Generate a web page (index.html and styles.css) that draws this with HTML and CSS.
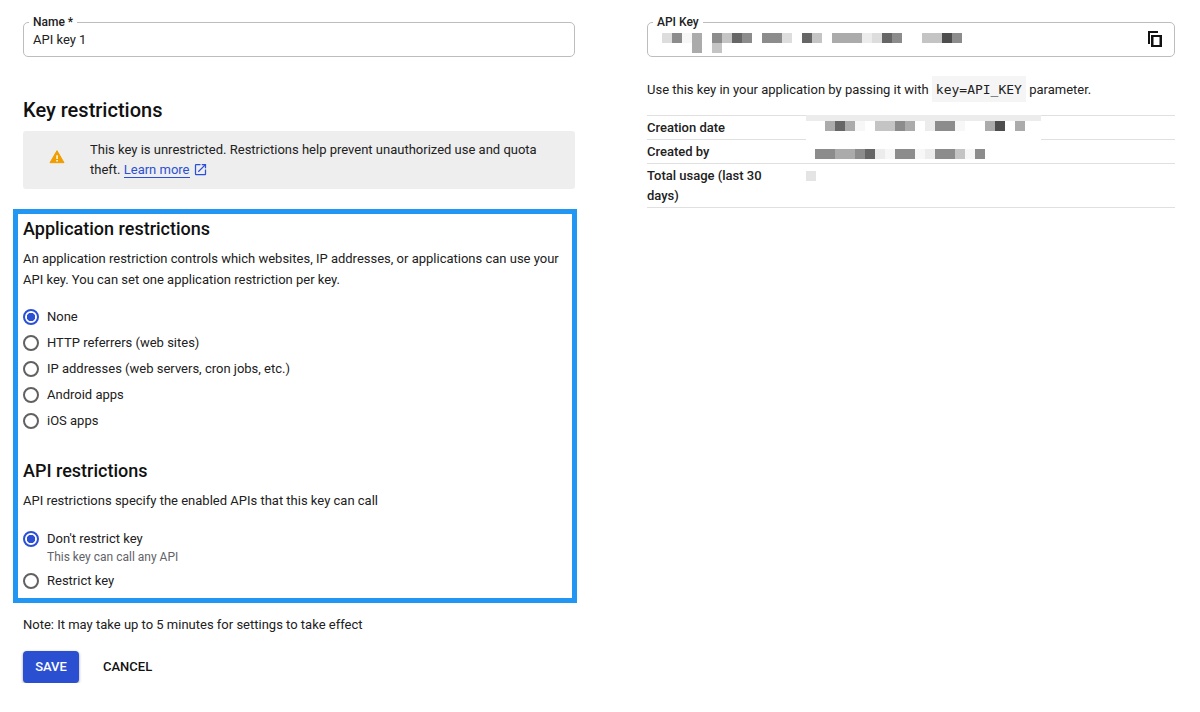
FILE: index.html
```html
<!DOCTYPE html>
<html lang="en">
<head>
  <meta charset="UTF-8" />
  <title>API key</title>
  <link rel="stylesheet" href="styles.css">
</head>
<body>

<div class="page">

  <div class="left-col">
    <div class="field name-field">
      <span class="field-label">Name *</span>
      <span class="field-value">API key 1</span>
    </div>

    <h2 class="key-title">Key restrictions</h2>

    <div class="alert">
      <svg class="alert-icon" width="16" height="16" viewBox="0 0 24 24"><path fill="#f09d00" stroke="#f09d00" stroke-width="1.500" stroke-linejoin="round" d="M1.500 20.500h21L12 2.500z"/><path fill="#fff" d="M11 9.500h2.200v5.500H11zM11 16.500h2.200v2.200H11z"/></svg>
      <p>This key is unrestricted. Restrictions help prevent unauthorized use and quota theft. <a href="#">Learn more</a>
        <svg class="ext-icon" width="15" height="15" viewBox="0 0 24 24"><path fill="#2b50d5" d="M19 19H5V5h7V3H5a2 2 0 0 0-2 2v14a2 2 0 0 0 2 2h14c1.100 0 2-.9 2-2v-7h-2v7zM14 3v2h3.590l-9.830 9.830 1.410 1.410L19 6.410V10h2V3h-7z"/></svg>
      </p>
    </div>

    <div class="highlight">
      <h3>Application restrictions</h3>
      <p class="desc">An application restriction controls which websites, IP addresses, or applications can use your API key. You can set one application restriction per key.</p>
      <div class="radio-group">
        <div class="radio-row"><span class="radio on"></span>None</div>
        <div class="radio-row"><span class="radio"></span>HTTP referrers (web sites)</div>
        <div class="radio-row"><span class="radio"></span>IP addresses (web servers, cron jobs, etc.)</div>
        <div class="radio-row"><span class="radio"></span>Android apps</div>
        <div class="radio-row"><span class="radio"></span>iOS apps</div>
      </div>

      <h3 class="api-title">API restrictions</h3>
      <p class="desc">API restrictions specify the enabled APIs that this key can call</p>
      <div class="radio-group api-group">
        <div class="radio-row with-hint"><span class="radio on"></span>Don't restrict key</div>
        <div class="hint">This key can call any API</div>
        <div class="radio-row"><span class="radio"></span>Restrict key</div>
      </div>
    </div>

    <p class="note">Note: It may take up to 5 minutes for settings to take effect</p>

    <div class="actions">
      <button class="btn-save">SAVE</button>
      <button class="btn-cancel">CANCEL</button>
    </div>
  </div>

  <div class="right-col">
    <div class="field key-field">
      <span class="field-label">API Key</span>
      <div class="mosaic key-mosaic">
        <div class="mosaic-row">
          <i class="s1"></i><i class="s4"></i><i class="w0"></i><i class="s3"></i><i class="s0"></i><i class="s4"></i><i class="s2"></i><i class="s5"></i><i class="s4"></i><i class="s0"></i><i class="s4"></i><i class="s4"></i><i class="s1"></i><i class="s0"></i><i class="s5"></i><i class="s2"></i><i class="s0"></i><i class="s3"></i><i class="s3"></i><i class="s3"></i><i class="w1"></i><i class="s1"></i><i class="s5"></i><i class="s4"></i><i class="s0"></i><i class="s0"></i><i class="s2"></i><i class="s2"></i><i class="s6"></i><i class="s4"></i>
        </div>
        <div class="mosaic-row">
          <i class="s0"></i><i class="s0"></i><i class="s0"></i><i class="s3"></i><i class="s0"></i><i class="s2"></i>
        </div>
      </div>
      <svg class="copy-icon" width="14" height="16" viewBox="0 0 14 16"><path fill="#111" d="M0 0h10v2H2v11H0z"/><path fill="#111" fill-rule="evenodd" d="M3 4h11v12H3zM5.500 6v8h6V6z"/></svg>
    </div>

    <p class="use-key">Use this key in your application by passing it with <code>key=API_KEY</code> parameter.</p>

    <div class="info-table">
      <div class="info-row">
        <div class="info-label">Creation date</div>
        <div class="date-value">
          <div class="mosaic-row">
            <i class="s3"></i><i class="s5"></i><i class="s3"></i><i class="w0"></i><i class="s0"></i><i class="s2"></i><i class="s2"></i><i class="s4"></i><i class="s3"></i><i class="s0"></i><i class="w1"></i><i class="s4"></i><i class="s4"></i><i class="w0"></i><i class="s0"></i><i class="s0"></i><i class="s3"></i><i class="s6"></i><i class="s0"></i><i class="s3"></i>
          </div>
        </div>
      </div>
      <div class="info-row">
        <div class="info-label">Created by</div>
        <div class="info-value">
          <div class="mosaic-row">
            <i class="s4"></i><i class="s4"></i><i class="s3"></i><i class="s3"></i><i class="s4"></i><i class="s5"></i><i class="w1"></i><i class="w0"></i><i class="s4"></i><i class="s4"></i><i class="w0"></i><i class="w1"></i><i class="s4"></i><i class="s4"></i><i class="s2"></i><i class="w0"></i><i class="s4"></i>
          </div>
        </div>
      </div>
      <div class="info-row">
        <div class="info-label">Total usage (last 30 days)</div>
        <div class="info-value usage-value"><div class="mosaic-row"><i class="w2"></i></div></div>
      </div>
    </div>
  </div>

</div>

</body>
</html>
```

FILE: styles.css
```css
* {
  box-sizing: border-box;
}

body {
  margin: 0;
  background: #fff;
  color: #212121;
  font-family: Roboto, sans-serif;
  font-size: 13px;
  line-height: 20px;
}

p, h2, h3 {
  margin: 0;
}

.page {
  display: flex;
  align-items: flex-start;
  padding: 22px 25px 0 23px;
  gap: 72px;
}

.left-col {
  width: 552px;
  flex-shrink: 0;
}

.right-col {
  flex: 1;
}

/* outlined field */
.field {
  position: relative;
  height: 35px;
  border: 1px solid #bdbdbd;
  border-radius: 5px;
  display: flex;
  align-items: center;
  padding: 0 9px;
}

.field-label {
  position: absolute;
  top: -9px;
  left: 5px;
  padding: 0 4px;
  background: #fff;
  font-size: 12px;
  font-weight: 500;
  line-height: 16px;
}

.key-title {
  margin-top: 41px;
  font-size: 20px;
  font-weight: 500;
  line-height: 24px;
  color: #111;
}

/* warning box */
.alert {
  display: flex;
  align-items: center;
  height: 58px;
  margin-top: 9px;
  padding: 0 20px 0 26px;
  background: #eee;
  border-radius: 3px;
}

.alert-icon {
  flex-shrink: 0;
  margin-right: 25px;
  margin-bottom: 6px;
}

.alert a {
  color: #2b50d5;
  text-decoration: none;
  border-bottom: 1px solid #2b50d5;
}

.ext-icon {
  vertical-align: -3px;
}

/* the blue marker box */
.highlight {
  width: 564px;
  height: 394px;
  margin: 20px 0 0 -10px;
  padding: 3px 5px 0 5px;
  border: 5px solid #2196f3;
}

.highlight h3 {
  font-size: 18px;
  font-weight: 500;
  line-height: 24px;
  color: #111;
}

.desc {
  margin-top: 7px;
  line-height: 21px;
}

.radio-group {
  margin-top: 14px;
}

.radio-row {
  display: flex;
  align-items: center;
  gap: 8px;
  height: 26px;
}

.radio {
  width: 16px;
  height: 16px;
  border: 2px solid #616161;
  border-radius: 50%;
  flex-shrink: 0;
}

.radio.on {
  border-color: #2b50d5;
  background: radial-gradient(circle, #2b50d5 0, #2b50d5 4px, #fff 4.500px);
}

.highlight .api-title {
  margin-top: 25px;
}

.api-group {
  margin-top: 17px;
}

.with-hint {
  height: 22px;
}

.hint {
  margin: -1px 0 3px 24px;
  font-size: 12px;
  line-height: 16px;
  color: #5f6368;
}

.note {
  margin-top: 12px;
}

.actions {
  display: flex;
  align-items: center;
  margin-top: 16px;
}

.btn-save {
  width: 56px;
  height: 32px;
  padding: 0 0 1px;
  border: 0;
  border-radius: 4px;
  background: #2b4fd1;
  color: #fff;
  font: 500 13px Roboto, sans-serif;
  box-shadow: 0 1px 3px rgba(0,0,0,0.4);
}

.btn-cancel {
  margin-left: 24px;
  padding: 0 0 1px;
  border: 0;
  background: none;
  color: #111;
  font: 500 13px Roboto, sans-serif;
}

/* right column */
.mosaic {
  display: flex;
  flex-direction: column;
}

.key-mosaic {
  align-self: flex-start;
  margin: 10px 0 0 5px;
}

/* blurred out values */
.mosaic-row {
  display: flex;
  height: 10px;
}

.mosaic-row i {
  display: block;
  width: 10px;
  flex-shrink: 0;
}

.s0 { background: #fff; }
.s1 { background: #ddd; }
.s2 { background: #c4c4c4; }
.s3 { background: #ababab; }
.s4 { background: #8c8c8c; }
.s5 { background: #666; }
.s6 { background: #4d4d4d; }
.w0 { background: #f7f7f7; }
.w1 { background: #ececec; }
.w2 { background: #e4e4e4; }

.copy-icon {
  position: absolute;
  right: 12px;
  top: 8px;
}

.use-key {
  margin-top: 19px;
}

.use-key code {
  display: inline-block;
  padding: 2px 4px 0;
  background: #f5f5f5;
  font-family: "DejaVu Sans Mono", monospace;
  font-size: 13px;
  line-height: 24px;
}

.info-table {
  margin-top: 13px;
  border-top: 1px solid #e0e0e0;
}

.info-row {
  position: relative;
  display: flex;
  border-bottom: 1px solid #e0e0e0;
  min-height: 24px;
}

.info-label {
  width: 159px;
  padding: 2px 20px 1px 0;
  font-weight: 500;
  flex-shrink: 0;
}

.info-value {
  padding: 9px 0 0 9px;
}

.usage-value {
  padding: 7px 0 0 0;
}

/* patch that sits over the table lines */
.date-value {
  position: absolute;
  left: 159px;
  top: -1px;
  width: 235px;
  height: 25px;
  padding-left: 19px;
  background: #fff;
  border-top: 6px solid #ececec;
}
```
